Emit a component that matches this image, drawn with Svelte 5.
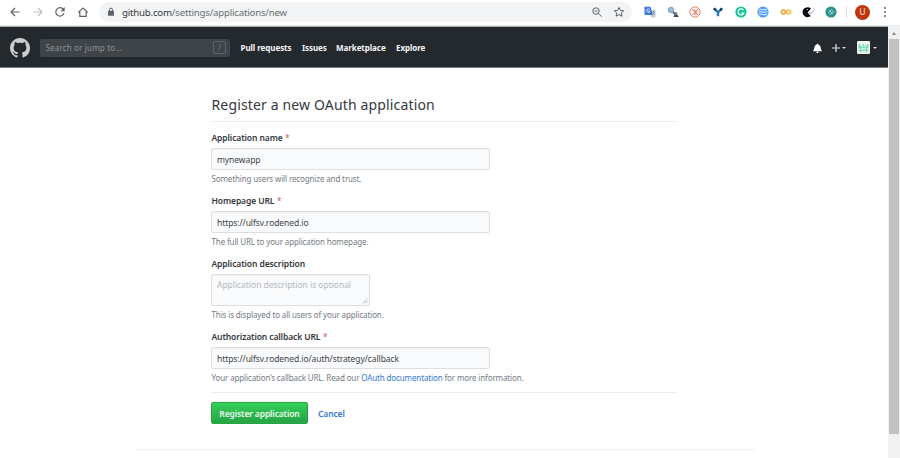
<script>
  const nav = [
    { label: 'Pull requests', width: 52 },
    { label: 'Issues', width: 24 },
    { label: 'Marketplace', width: 50 },
    { label: 'Explore', width: 31 }
  ];
  const pixels = [
    [0, 1], [6, 1], [3, 1], [0, 2], [1, 2], [3, 2], [5, 2], [6, 2], [0, 3], [1, 3], [2, 3], [3, 3],
    [4, 3], [5, 3], [6, 3], [1, 4], [5, 4], [0, 5], [1, 5], [2, 5], [3, 5], [4, 5], [5, 5], [6, 5], [1, 6], [5, 6]
  ];
</script>

<div class="page">
  <div class="toolbar">
    <div class="controls">
      <svg viewBox="0 0 12 12"><path d="M10.5 6H2M6 2 2 6l4 4" /></svg>
      <svg class="off" viewBox="0 0 12 12"><path d="M1.5 6H10M6 2l4 4-4 4" /></svg>
      <svg viewBox="0 0 12 12"><path d="M9.4 3.4A4.2 4.2 0 1 0 10 7.2" /><path class="solid" d="M10.7 1v4.2H6.5z" /></svg>
      <svg viewBox="0 0 12 12"><path d="M1.3 6.4 6 2l4.7 4.4M2.8 5.5v4.8h6.4V5.5" /></svg>
    </div>
    <div class="address">
      <svg class="lock" viewBox="0 0 8 10"><rect x="1" y="3.8" width="6" height="5" rx=".6" fill="#5f6368" /><path d="M2.5 4V2.7a1.5 1.5 0 0 1 3 0V4" fill="none" stroke="#5f6368" /></svg>
      <span class="url">github.com<i>/settings/applications/new</i></span>
      <svg class="tool" viewBox="0 0 12 12"><circle cx="5" cy="5" r="3.2" /><path d="m7.4 7.4 3.3 3.3M3.6 5h2.8" /></svg>
      <svg class="tool star" viewBox="0 0 12 12"><path d="m6 1.4 1.35 3.05 3.35.35-2.5 2.2.7 3.25L6 8.6l-2.9 1.65.7-3.25-2.5-2.2 3.35-.35z" /></svg>
    </div>
    <div class="extensions">
      <svg viewBox="0 0 12 12"><path d="M4.5 3.5H11q.5 0 .5.5v7q0 .5-.5.5H7z" fill="#c9cdd2" /><path d="M1 .8h5.5L8.8 9H1.2Q.5 9 .5 8.3V1.3Q.5.8 1 .8z" fill="#4179e0" /><path d="M5.7 3.6a1.7 1.7 0 1 0 .3 1.6H4.4" fill="none" stroke="#fff" stroke-width=".8" /><path d="M8 6h3M9.5 5v1M10.5 6 8.5 9M8.8 7l2 2" stroke="#77808a" stroke-width=".6" /></svg>
      <svg viewBox="0 0 12 12"><circle cx="4" cy="4" r="2.8" fill="#8dbde2" stroke="#8495a5" stroke-width=".8" /><path d="m6 6 3 3" stroke="#566573" stroke-width="1.8" /><path d="M6.5 11q.2-2.3 2.3-2.6 2.5.2 3.1 2.6z" fill="#37475c" /><circle cx="9" cy="7.6" r="1.4" fill="#687686" /></svg>
      <svg viewBox="0 0 12 12" fill="none" stroke="#f17c6c"><circle cx="6" cy="6" r="5.1" /><path d="m2.5 2.5 7 7M9.4 2.6 2.6 9.4M3.2 4.2h3.6q1.6.2 1.2 1.8L5 8.4h3.5" stroke-width=".9" /></svg>
      <svg viewBox="0 0 12 12"><path d="m2.2 2.6 3.8 3.8 3.8-3.8M6 6v4.3" fill="none" stroke="#2377b8" stroke-width="2.4" /><path d="m1.8 2.2 2 2M10.2 2.2l-2 2" stroke="#12375e" stroke-width="2" /></svg>
      <svg viewBox="0 0 12 12"><circle cx="6" cy="6" r="5.6" fill="#15c39a" /><path d="M8.5 4.2A3 3 0 1 0 8.8 7.2H6.4" fill="none" stroke="#fff" stroke-width="1.2" /></svg>
      <svg viewBox="0 0 12 12"><circle cx="6" cy="6" r="5.6" fill="#4b9cf5" /><path d="M1.5 4.5q2-2 4.2-1t4.4-.5M2 6.5q2-1.3 4-.5t4.5-.5M2 8.5q2-1 4 0t4-.6" fill="none" stroke="#fff" stroke-width=".9" /></svg>
      <svg viewBox="0 0 12 12" fill="none" stroke-width="1.6"><circle cx="3.4" cy="6" r="2" stroke="#f5a12b" /><circle cx="8.6" cy="6" r="2" stroke="#f9b94b" /></svg>
      <svg viewBox="0 0 12 12"><path d="M9 2.5A5 5 0 1 0 8.8 10L5.6 6.5z" fill="#0b0b0e" /><circle cx="5.5" cy="3.5" r=".6" fill="#fff" /><path d="m7.5 6 1.3 2L11.8 4" fill="none" stroke="#8b91c9" stroke-width=".8" /></svg>
      <svg viewBox="0 0 12 12"><circle cx="6" cy="6" r="5.6" fill="#2b9290" /><path d="M3.5 6.7 6.7 3.2M5.3 8.8l3.2-3.5M3.5 6.7l1 1M7.5 4.3l1 1M4.5 4.2l3 3.7" fill="none" stroke="#d3efe9" stroke-width=".8" /></svg>
    </div>
    <span class="rule"></span>
    <span class="profile">U</span>
    <svg class="dots" viewBox="0 0 4 12" fill="#5f6368"><circle cx="2" cy="2" r="1" /><circle cx="2" cy="6" r="1" /><circle cx="2" cy="10" r="1" /></svg>
  </div>

  <div class="viewport">
    <div class="document">
      <header>
        <svg class="mark" viewBox="0 0 16 16" fill="#cbcdcf"><path d="M8 0C3.58 0 0 3.58 0 8c0 3.54 2.29 6.53 5.47 7.59.4.07.55-.17.55-.38 0-.19-.01-.82-.01-1.49-2.01.37-2.53-.49-2.69-.94-.09-.23-.48-.94-.82-1.13-.28-.15-.68-.52-.01-.53.63-.01 1.08.58 1.23.82.72 1.21 1.87.87 2.33.66.07-.52.28-.87.51-1.07-1.78-.2-3.64-.89-3.64-3.95 0-.87.31-1.59.82-2.15-.08-.2-.36-1.02.08-2.12 0 0 .67-.21 2.2.82.64-.18 1.32-.27 2-.27s1.36.09 2 .27c1.53-1.04 2.2-.82 2.2-.82.44 1.1.16 1.92.08 2.12.51.56.82 1.27.82 2.15 0 3.07-1.87 3.75-3.65 3.95.29.25.54.73.54 1.48 0 1.07-.01 1.93-.01 2.2 0 .21.15.46.55.38A8.01 8.01 0 0 0 16 8c0-4.42-3.58-8-8-8z" /></svg>
        <div class="search"><span>Search or jump to...</span><kbd>/</kbd></div>
        <nav>
          {#each nav as item}
            <a href="#top" style="width: {item.width}px">{item.label}</a>
          {/each}
        </nav>
        <svg class="bell" viewBox="0 0 14 16" fill="#fff"><path d="M14 12v1H0v-1l.73-.58c.77-.77.81-2.55 1.19-4.42C2.69 3.23 6 2 6 2c0-.55.45-1 1-1s1 .45 1 1c0 0 3.39 1.23 4.16 5 .38 1.88.42 3.66 1.19 4.42l.66.58H14zm-7 4c1.11 0 2-.89 2-2H5c0 1.11.89 2 2 2z" /></svg>
        <svg class="plus" viewBox="0 0 8 8"><path d="M4 0v8M0 4h8" stroke="#e4e5e6" stroke-width="1.2" /></svg>
        <i class="caret"></i>
        <svg class="avatar" viewBox="0 0 12 12"><rect width="12" height="12" rx="1.2" fill="#f1f3f2" />
          {#each pixels as [x, y]}<rect x={1.4 + x * 1.3} y={1.4 + y * 1.3} width="1.35" height="1.35" fill="#79d8b5" />{/each}
        </svg>
        <i class="caret last"></i>
      </header>

      <main>
        <h1>Register a new OAuth application</h1>
        <form>
          <div class="group">
            <label for="name">Application name <b>*</b></label>
            <input id="name" value="mynewapp" />
            <p>Something users will recognize and trust.</p>
          </div>
          <div class="group">
            <label for="home">Homepage URL <b>*</b></label>
            <input id="home" value="https://ulfsv.rodened.io" />
            <p>The full URL to your application homepage.</p>
          </div>
          <div class="group about">
            <label for="about">Application description</label>
            <div class="area">
              <textarea id="about" placeholder="Application description is optional"></textarea>
              <svg class="grip" viewBox="0 0 7 7"><path d="M.5 6.5l6-6M3.5 6.5l3-3" fill="none" stroke="#a4a7aa" stroke-width=".8" /></svg>
            </div>
            <p>This is displayed to all users of your application.</p>
          </div>
          <div class="group callback">
            <label for="callback">Authorization callback URL <b>*</b></label>
            <input id="callback" value="https://ulfsv.rodened.io/auth/strategy/callback" />
            <p>Your application’s callback URL. Read our <a href="#docs">OAuth documentation</a> for more information.</p>
          </div>
          <div class="actions">
            <button type="button">Register application</button>
            <a href="#cancel">Cancel</a>
          </div>
        </form>
      </main>
      <footer></footer>
    </div>
    <div class="scrollbar"><i class="up"></i><div class="thumb"></div></div>
  </div>
</div>

<style>
  :global(body) { margin: 0; background: #fff; overflow: hidden; }
  .page { width: 900px; height: 458px; display: flex; flex-direction: column; font-family: 'Noto Sans', 'Open Sans', sans-serif; color: #35393e; white-space: nowrap; overflow: hidden; }
  .page * { box-sizing: border-box; }
  svg { display: block; flex: none; }
  .toolbar { height: 26px; flex: none; display: flex; align-items: center; padding: 0 0 1px 9px; border-bottom: 1px solid #eceded; }
  .controls { display: flex; gap: 10.7px; width: 90px; }
  .controls svg { width: 12px; height: 12px; fill: none; stroke: #5f6368; stroke-width: 1.2; }
  .controls .off { stroke: #b9bbbd; }
  .controls .solid { fill: #5f6368; stroke: none; }
  .address { width: 533px; height: 20px; display: flex; align-items: center; border-radius: 10px; background: #f1f3f4; padding: 0 7px 0 8px; }
  .lock { width: 8px; height: 10px; margin-right: 7px; }
  .url { flex: 1; font-size: 9.7px; line-height: 18px; letter-spacing: -.22px; color: #35383b; padding-top: 1px; }
  .url i { font-style: normal; color: #6b6f73; }
  .tool { width: 12px; height: 12px; fill: none; stroke: #5f6368; stroke-width: 1; }
  .star { margin-left: 10.5px; }
  .extensions { display: flex; gap: 10.55px; margin-left: 12.4px; }
  .extensions svg { width: 12px; height: 12px; }
  .rule { width: 1px; height: 11px; margin-left: 9.2px; background: #dadcdf; }
  .profile { width: 15px; height: 15px; border-radius: 50%; margin-left: 8px; background: #bf360c; color: #f5ddd5; font: 9px/15px Roboto, sans-serif; text-align: center; }
  .dots { width: 4px; height: 12px; margin-left: 13px; }

  .viewport { height: 432px; display: flex; }
  .document { width: 888px; display: flex; flex-direction: column; }
  header { height: 42px; background: #24292e; border-top: 1px solid #a9acae; border-bottom: 1px solid #777b7e; display: flex; align-items: center; padding: 1px 0 0 10px; }
  .mark { width: 20px; height: 20px; margin-right: 10px; }
  .search { width: 190px; height: 18px; border-radius: 2px; background: #3f4448; display: flex; align-items: center; justify-content: space-between; padding: 0 4px 0 5.5px; color: #8f9396; font-size: 8px; letter-spacing: .17px; }
  kbd { width: 13px; height: 13px; border: 1px solid #606468; border-radius: 2px; font: 8px/11px 'Noto Sans', sans-serif; text-align: center; color: #777b7e; }
  nav { display: flex; gap: 10px; margin-left: 10.5px; width: 572.5px; }
  nav a { font-size: 8px; line-height: 12px; font-weight: 700; color: #f4f4f5; text-decoration: none; letter-spacing: -.06px; }
  nav a:nth-child(n + 2) { text-indent: -.5px; }
  .bell { width: 9px; height: 10px; margin-top: 1px; }
  .plus { width: 8px; height: 8px; margin-left: 10px; }
  .caret { width: 0; height: 0; border: 2.5px solid transparent; border-top-color: #dcddde; border-bottom: 0; margin-left: 2px; }
  .avatar { width: 13px; height: 13px; margin-left: 10.5px; }
  .last { margin-left: 3px; }

  main { width: 466px; margin: 26px 0 0 211px; }
  h1 { height: 28px; margin: 0 0 9px; border-bottom: 1px solid #eaecef; font-size: 14px; line-height: 22px; font-weight: 400; letter-spacing: .15px; text-indent: .5px; }
  .group { height: 63px; }
  .about { height: 73px; }
  .callback { border-bottom: 1px solid #eaecef; }
  label { display: block; height: 17px; font-size: 8.5px; line-height: 14px; font-weight: 600; letter-spacing: -.1px; text-indent: .5px; }
  label b { color: #d5535c; font-size: 8px; font-weight: 400; margin-left: .6px; }
  input, textarea { display: block; width: 279px; height: 22px; margin: 0; padding: 0 5px; border: 1px solid #dcdfe2; border-radius: 2px; background: #fafbfc; color: #3c4146; font-family: inherit; font-size: 8.5px; letter-spacing: -.08px; outline: 0; box-shadow: inset 0 1px 1px rgba(27, 31, 35, .04); }
  .area { position: relative; width: 159px; }
  textarea { width: 159px; height: 32px; padding: 4px 5px; line-height: 12px; letter-spacing: -.04px; resize: none; }
  textarea::placeholder { color: #b3b7bb; opacity: 1; }
  .grip { position: absolute; right: 2px; bottom: 2px; width: 6px; height: 6px; }
  p { margin: 2px 0 0; font-size: 8px; line-height: 13px; letter-spacing: -.13px; color: #747b83; text-indent: .5px; }
  a { color: #3577d9; text-decoration: none; }
  .actions { display: flex; align-items: center; gap: 10px; margin-top: 9px; font-size: 8.5px; font-weight: 600; letter-spacing: -.13px; }
  button { width: 97px; height: 22px; padding: 0; border: 1px solid #28a343; border-radius: 2px; background: linear-gradient(#34d058, #28a745 90%); color: #e9f9ed; font: inherit; letter-spacing: inherit; white-space: nowrap; }
  footer { width: 620px; margin: 25px 0 0 135px; border-top: 1px solid #eff1f3; }
  .scrollbar { width: 12px; background: #f1f1f1; display: flex; flex-direction: column; align-items: center; }
  .up { border: 2.5px solid transparent; border-bottom: 3px solid #898989; border-top: 0; margin: 6px 0 4px; }
  .thumb { width: 10px; height: 395px; background: #c1c1c1; }
</style>
